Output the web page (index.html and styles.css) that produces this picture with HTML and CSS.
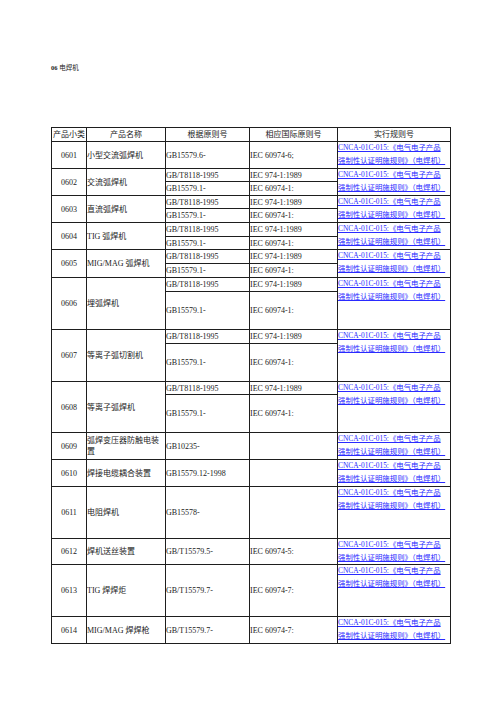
FILE: index.html
```html
<!DOCTYPE html>
<html lang="zh">
<head>
<meta charset="utf-8">
<title>06 电焊机</title>
<link rel="stylesheet" href="styles.css">
</head>
<body>
<div class="page">
  <p class="title"><b>06</b> 电焊机</p>
  <table class="grid">
    <colgroup>
      <col class="c1"><col class="c2"><col class="c3"><col class="c4"><col class="c5">
    </colgroup>
    <tr class="h14 head">
      <td>产品小类</td><td>产品名称</td><td>根据原则号</td><td>相应国际原则号</td><td>实行规则号</td>
    </tr>
    <tr class="h27">
      <td class="code">0601</td><td>小型交流弧焊机</td><td>GB15579.6-</td><td>IEC 60974-6;</td>
      <td class="link"><a href="#">CNCA-01C-015:《电气电子产品<br>强制性认证明施规则》（电焊机）</a></td>
    </tr>
    <tr class="h13">
      <td class="code" rowspan="2">0602</td><td rowspan="2">交流弧焊机</td><td>GB/T8118-1995</td><td>IEC 974-1:1989</td>
      <td class="link" rowspan="2"><a href="#">CNCA-01C-015:《电气电子产品<br>强制性认证明施规则》（电焊机）</a></td>
    </tr>
    <tr class="h14"><td>GB15579.1-</td><td>IEC 60974-1:</td></tr>
    <tr class="h13">
      <td class="code" rowspan="2">0603</td><td rowspan="2">直流弧焊机</td><td>GB/T8118-1995</td><td>IEC 974-1:1989</td>
      <td class="link" rowspan="2"><a href="#">CNCA-01C-015:《电气电子产品<br>强制性认证明施规则》（电焊机）</a></td>
    </tr>
    <tr class="h14"><td>GB15579.1-</td><td>IEC 60974-1:</td></tr>
    <tr class="h14">
      <td class="code" rowspan="2">0604</td><td rowspan="2">TIG 弧焊机</td><td>GB/T8118-1995</td><td>IEC 974-1:1989</td>
      <td class="link" rowspan="2"><a href="#">CNCA-01C-015:《电气电子产品<br>强制性认证明施规则》（电焊机）</a></td>
    </tr>
    <tr class="h13"><td>GB15579.1-</td><td>IEC 60974-1:</td></tr>
    <tr class="h14">
      <td class="code" rowspan="2">0605</td><td rowspan="2">MIG/MAG 弧焊机</td><td>GB/T8118-1995</td><td>IEC 974-1:1989</td>
      <td class="link" rowspan="2"><a href="#">CNCA-01C-015:《电气电子产品<br>强制性认证明施规则》（电焊机）</a></td>
    </tr>
    <tr class="h14"><td>GB15579.1-</td><td>IEC 60974-1:</td></tr>
    <tr class="h14">
      <td class="code" rowspan="2">0606</td><td rowspan="2">埋弧焊机</td><td>GB/T8118-1995</td><td>IEC 974-1:1989</td>
      <td class="link" rowspan="2"><a href="#">CNCA-01C-015:《电气电子产品<br>强制性认证明施规则》（电焊机）</a></td>
    </tr>
    <tr class="h38"><td>GB15579.1-</td><td>IEC 60974-1:</td></tr>
    <tr class="h14">
      <td class="code" rowspan="2">0607</td><td rowspan="2">等离子弧切割机</td><td>GB/T8118-1995</td><td>IEC 974-1:1989</td>
      <td class="link" rowspan="2"><a href="#">CNCA-01C-015:《电气电子产品<br>强制性认证明施规则》（电焊机）</a></td>
    </tr>
    <tr class="h38"><td>GB15579.1-</td><td>IEC 60974-1:</td></tr>
    <tr class="h13">
      <td class="code" rowspan="2">0608</td><td rowspan="2">等离子弧焊机</td><td>GB/T8118-1995</td><td>IEC 974-1:1989</td>
      <td class="link" rowspan="2"><a href="#">CNCA-01C-015:《电气电子产品<br>强制性认证明施规则》（电焊机）</a></td>
    </tr>
    <tr class="h38"><td>GB15579.1-</td><td>IEC 60974-1:</td></tr>
    <tr class="h27">
      <td class="code">0609</td><td class="wrap">弧焊变压器防触电装置</td><td>GB10235-</td><td></td>
      <td class="link"><a href="#">CNCA-01C-015:《电气电子产品<br>强制性认证明施规则》（电焊机）</a></td>
    </tr>
    <tr class="h27">
      <td class="code">0610</td><td>焊接电缆耦合装置</td><td>GB15579.12-1998</td><td></td>
      <td class="link"><a href="#">CNCA-01C-015:《电气电子产品<br>强制性认证明施规则》（电焊机）</a></td>
    </tr>
    <tr class="h52">
      <td class="code">0611</td><td>电阻焊机</td><td>GB15578-</td><td></td>
      <td class="link"><a href="#">CNCA-01C-015:《电气电子产品<br>强制性认证明施规则》（电焊机）</a></td>
    </tr>
    <tr class="h26">
      <td class="code">0612</td><td>焊机送丝装置</td><td>GB/T15579.5-</td><td>IEC 60974-5:</td>
      <td class="link"><a href="#">CNCA-01C-015:《电气电子产品<br>强制性认证明施规则》（电焊机）</a></td>
    </tr>
    <tr class="h52">
      <td class="code">0613</td><td>TIG 焊焊炬</td><td>GB/T15579.7-</td><td>IEC 60974-7:</td>
      <td class="link"><a href="#">CNCA-01C-015:《电气电子产品<br>强制性认证明施规则》（电焊机）</a></td>
    </tr>
    <tr class="h27">
      <td class="code">0614</td><td>MIG/MAG 焊焊枪</td><td>GB/T15579.7-</td><td>IEC 60974-7:</td>
      <td class="link"><a href="#">CNCA-01C-015:《电气电子产品<br>强制性认证明施规则》（电焊机）</a></td>
    </tr>
  </table>
</div>
</body>
</html>
```

FILE: styles.css
```css
html, body {
  margin: 0;
  padding: 0;
  background: #ffffff;
}

.page {
  padding: 64px 0 0 51px;
  font-family: "Liberation Serif", "Noto Sans CJK SC", serif;
  color: #222222;
}

.title {
  margin: 0;
  font-size: 6.5px;
  line-height: 8px;
  height: 8px;
}

.grid {
  margin-top: 55px;
  width: 399px;
  table-layout: fixed;
  border-collapse: collapse;
  font-size: 8px;
  line-height: 11px;
}

.c1 { width: 35px; }
.c2 { width: 79px; }
.c3 { width: 84px; }
.c4 { width: 88px; }
.c5 { width: 113px; }

.grid td {
  border: 1px solid #1e1e1e;
  padding: 0;
  vertical-align: middle;
  text-align: left;
  white-space: nowrap;
  overflow: hidden;
}

.grid .head td {
  text-align: center;
}

.grid td.code {
  text-align: center;
}

.grid td.wrap {
  white-space: normal;
}

.grid td.link {
  vertical-align: top;
  font-size: 7.4px;
  line-height: 12.5px;
}

.link a {
  color: #2a2aff;
  text-decoration: underline;
}

.h13 { height: 13px; }
.h14 { height: 14px; }
.h26 { height: 26px; }
.h27 { height: 27px; }
.h38 { height: 38px; }
.h52 { height: 52px; }
```
